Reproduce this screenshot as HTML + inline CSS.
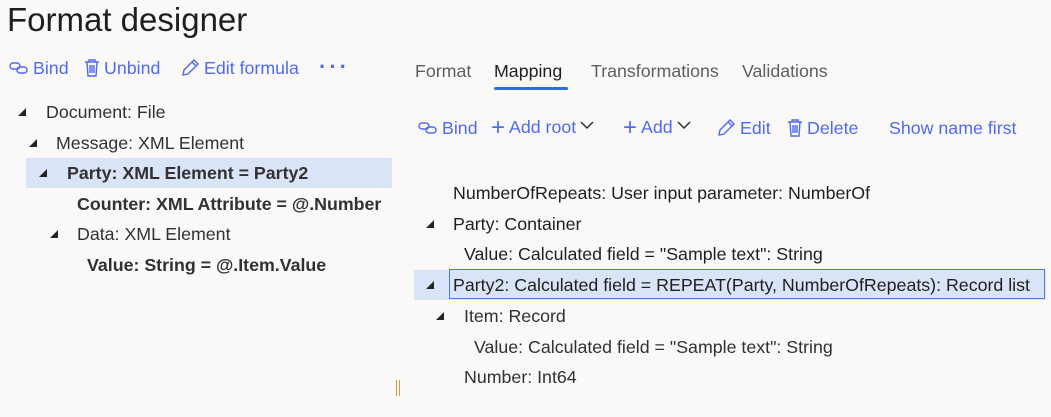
<!DOCTYPE html>
<html><head><style>
body{margin:0;width:1051px;height:417px;background:#faf9f8;font-family:"Liberation Sans",sans-serif;color:#323130;position:relative;overflow:hidden}
.a{position:absolute;white-space:nowrap;font-size:17.8px;line-height:22px}
.t{position:absolute;font-size:0;width:0;height:0;border-left:8px solid transparent;border-bottom:8px solid #252423}
.l{color:#4f6bed}
.b{font-weight:bold}
svg{margin-right:4px}
</style></head><body>
<div class="a" style="left:7px;top:0px;font-size:33px;line-height:40px;color:#201f1e">Format designer</div>

<div class="a l" style="left:9px;top:57px">
<svg width="20" height="14" viewBox="0 0 20 14" style="vertical-align:-1px"><g fill="none" stroke="#4f6bed" stroke-width="1.4"><rect x="1" y="2" width="10" height="6" rx="3"/><rect x="8" y="6" width="10" height="6" rx="3"/></g></svg>Bind</div>
<div class="a l" style="left:84px;top:57px">
<svg width="16" height="18" viewBox="0 0 16 18" style="vertical-align:-3px"><g fill="none" stroke="#4f6bed" stroke-width="1.4"><path d="M1 3h14M5 3V1h6v2M3 3l1 14h8l1-14M6 6v8M8 6v8M10 6v8"/></g></svg>Unbind</div>
<div class="a l" style="left:180px;top:57px">
<svg width="20" height="18" viewBox="0 0 20 18" style="vertical-align:-3px"><path d="M3 16l1-5L14 1l4 4L8 15z M12 3l4 4" fill="none" stroke="#4f6bed" stroke-width="1.4"/></svg>Edit formula</div>
<div class="a l" style="left:319px;top:56px;font-size:22px;letter-spacing:3px;font-weight:bold">···</div>

<div class="t" style="left:18px;top:108px"></div><div class="a" style="left:46px;top:101px">Document: File</div>
<div class="t" style="left:29px;top:139px"></div><div class="a" style="left:56px;top:132px">Message: XML Element</div>
<div style="position:absolute;left:26px;top:158px;width:366px;height:30px;background:#dae4f8"></div>
<div class="t" style="left:39px;top:169px"></div><div class="a b" style="left:67px;top:162px">Party: XML Element = Party2</div>
<div class="a b" style="left:77px;top:193px">Counter: XML Attribute = @.Number</div>
<div class="t" style="left:50px;top:230px"></div><div class="a" style="left:77px;top:223px">Data: XML Element</div>
<div class="a b" style="left:87px;top:254px">Value: String = @.Item.Value</div>

<div class="a" style="left:415px;top:60px;color:#605e5c">Format</div>
<div class="a" style="left:494px;top:60px;color:#201f1e">Mapping</div>
<div style="position:absolute;left:494px;top:87px;width:74px;height:3px;background:#2f6fdc;border-radius:2px"></div>
<div class="a" style="left:591px;top:60px;color:#605e5c">Transformations</div>
<div class="a" style="left:742px;top:60px;color:#605e5c">Validations</div>

<div class="a l" style="left:418px;top:117px"><svg width="20" height="14" viewBox="0 0 20 14" style="vertical-align:-1px"><g fill="none" stroke="#4f6bed" stroke-width="1.4"><rect x="1" y="2" width="10" height="6" rx="3"/><rect x="8" y="6" width="10" height="6" rx="3"/></g></svg>Bind</div>
<div class="a l" style="left:491px;top:116px"><span style="font-size:24px;font-weight:lighter;vertical-align:-2px">+</span> Add root<svg width="16" height="10" viewBox="0 0 16 10" style="margin-left:3px;vertical-align:2px"><path d="M2 1l6 6 6-6" fill="none" stroke="#323130" stroke-width="1.5"/></svg></div>
<div class="a l" style="left:623px;top:116px"><span style="font-size:24px;font-weight:lighter;vertical-align:-2px">+</span> Add<svg width="16" height="10" viewBox="0 0 16 10" style="margin-left:3px;vertical-align:2px"><path d="M2 1l6 6 6-6" fill="none" stroke="#323130" stroke-width="1.5"/></svg></div>
<div class="a l" style="left:716px;top:117px"><svg width="20" height="18" viewBox="0 0 20 18" style="vertical-align:-3px"><path d="M3 16l1-5L14 1l4 4L8 15z M12 3l4 4" fill="none" stroke="#4f6bed" stroke-width="1.4"/></svg>Edit</div>
<div class="a l" style="left:787px;top:117px"><svg width="16" height="18" viewBox="0 0 16 18" style="vertical-align:-3px"><g fill="none" stroke="#4f6bed" stroke-width="1.4"><path d="M1 3h14M5 3V1h6v2M3 3l1 14h8l1-14M6 6v8M8 6v8M10 6v8"/></g></svg>Delete</div>
<div class="a l" style="left:889px;top:117px">Show name first</div>

<div class="a" style="left:453px;top:182px;color:#201f1e">NumberOfRepeats: User input parameter: NumberOf</div>
<div class="t" style="left:426px;top:220px"></div><div class="a" style="left:453px;top:213px;color:#201f1e">Party: Container</div>
<div class="a" style="left:464px;top:243px;color:#201f1e">Value: Calculated field = "Sample text": String</div>
<div style="position:absolute;left:414px;top:270px;width:632px;height:30px;background:#dae4f8"></div>
<div style="position:absolute;left:449px;top:269px;width:594px;height:28px;border:1px solid #4f7ae0"></div>
<div class="t" style="left:426px;top:281px"></div><div class="a" style="left:453px;top:274px;color:#201f1e">Party2: Calculated field = REPEAT(Party, NumberOfRepeats): Record list</div>
<div class="t" style="left:436px;top:312px"></div><div class="a" style="left:464px;top:305px">Item: Record</div>
<div class="a" style="left:474px;top:336px">Value: Calculated field = "Sample text": String</div>
<div class="a" style="left:464px;top:366px">Number: Int64</div>
<div style="position:absolute;left:396px;top:380px;width:1px;height:16px;background:#c8a040"></div>
<div style="position:absolute;left:399px;top:380px;width:1px;height:16px;background:#c8a040"></div>
</body></html>
